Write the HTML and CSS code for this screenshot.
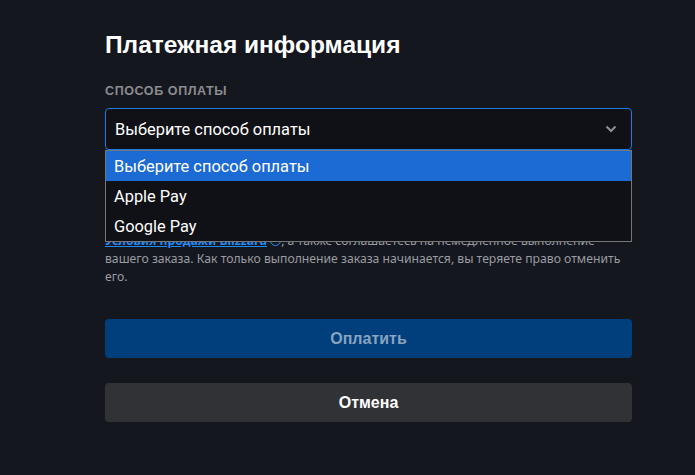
FILE: index.html
```html
<!DOCTYPE html>
<html lang="ru">
<head>
<meta charset="utf-8">
<title>Платежная информация</title>
<link rel="stylesheet" href="styles.css">
</head>
<body>
<main class="page">
  <h1 class="title">Платежная информация</h1>
  <div class="field">
    <label class="label">Способ оплаты</label>
    <div class="select-wrap">
      <div class="select">
        <span>Выберите способ оплаты</span>
        <svg class="chev" width="12" height="8" viewBox="0 0 12 8"><path d="M1.5 1.5 L6 6 L10.5 1.5" fill="none" stroke="#8c8d92" stroke-width="2.2"/></svg>
      </div>
      <ul class="options">
        <li class="opt active">Выберите способ оплаты</li>
        <li class="opt">Apple Pay</li>
        <li class="opt">Google Pay</li>
      </ul>
    </div>
  </div>
  <p class="terms">Нажимая кнопку «Оплатить», вы подтверждаете, что вам исполнилось<br>18 лет и что вы прочитали и принимаете положения и условия<br>следующих документов: Лицензионное соглашение и<br><a href="#">Условия продажи Blizzard</a> <span class="ext"></span>, а также соглашаетесь на немедленное выполнение<br>вашего заказа. Как только выполнение заказа начинается, вы теряете право отменить<br>его.</p>
  <button class="btn btn-pay">Оплатить</button>
  <button class="btn btn-cancel">Отмена</button>
</main>
</body>
</html>
```

FILE: styles.css
```css
html, body {
  margin: 0;
  padding: 0;
  background: #15171e;
  height: 100%;
}
.page {
  width: 527px;
  padding: 30px 0 0 105px;
  display: flex;
  flex-direction: column;
  font-family: "Noto Sans", sans-serif;
}
.title {
  margin: 0;
  font-family: "Liberation Sans", Arial, sans-serif;
  font-weight: 700;
  font-size: 24.5px;
  line-height: 30px;
  color: #fff;
}
.field {
  margin-top: 24px;
  display: flex;
  flex-direction: column;
}
.label {
  font-family: "Liberation Sans", Arial, sans-serif;
  font-weight: 700;
  font-size: 12.5px;
  line-height: 14px;
  color: #8b8b90;
  text-transform: uppercase;
  letter-spacing: 0.6px;
  margin-bottom: 10px;
}
.select-wrap {
  position: relative;
}
.select {
  height: 42px;
  box-sizing: border-box;
  border: 1px solid #1b7ae4;
  border-radius: 4px;
  background: #101116;
  color: #fff;
  font-family: Roboto, "Noto Sans", sans-serif;
  font-size: 16.4px;
  display: flex;
  align-items: center;
  justify-content: space-between;
  padding: 0 14px 0 9px;
}
.chev { display: block; }
.options {
  position: absolute;
  left: 0;
  right: 0;
  top: 42px;
  margin: 0;
  padding: 0;
  list-style: none;
  border: 1px solid #767676;
  background: #101116;
  z-index: 2;
}
.opt {
  height: 30px;
  display: flex;
  align-items: center;
  padding-left: 8px;
  color: #fff;
  font-family: Roboto, "Noto Sans", sans-serif;
  font-size: 16.4px;
}
.opt.active { background: #1c6ad4; }
.terms {
  margin: 28px 0 0;
  font-size: 12.2px;
  line-height: 18px;
  color: #9a9ca3;
  white-space: nowrap;
}
.terms a {
  color: #1d8cf4;
  font-weight: 700;
}
.ext {
  display: inline-block;
  width: 9px;
  height: 9px;
  border: 1.5px solid #1d8cf4;
  border-radius: 50%;
  vertical-align: -1px;
}
.btn {
  height: 39px;
  border: 0;
  border-radius: 4px;
  font-family: "Liberation Sans", Arial, sans-serif;
  font-weight: 700;
  font-size: 16px;
  width: 100%;
  padding: 0;
}
.btn-pay {
  margin-top: 33px;
  background: #003e7c;
  color: #8aa3bf;
}
.btn-cancel {
  margin-top: 25px;
  background: #313236;
  color: #fff;
}
```
